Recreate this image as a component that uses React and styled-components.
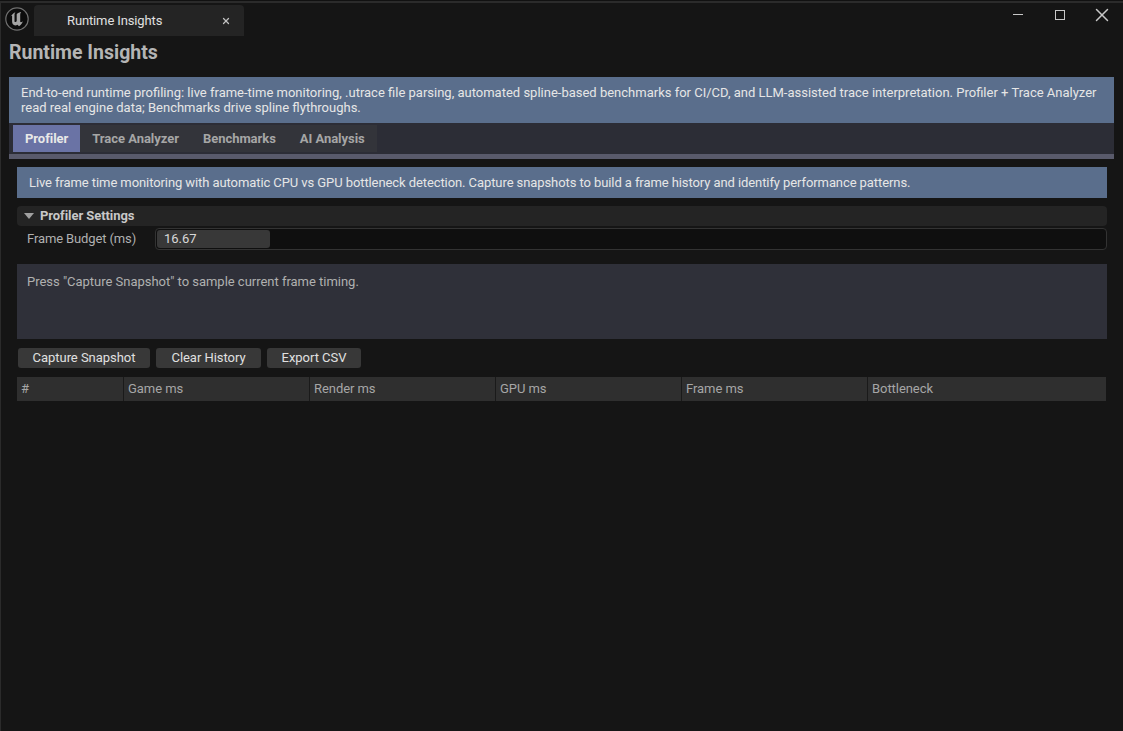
import React from "react";
import styled, { createGlobalStyle } from "styled-components";
import { X } from "lucide-react";

const GlobalStyle = createGlobalStyle`
  html, body, #root {
    margin: 0;
    height: 100%;
  }
  body {
    background: #111;
    font-family: Roboto, "Liberation Sans", sans-serif;
    font-size: 13px;
    overflow: hidden;
  }
`;

const Window = styled.div`
  height: 730px;
  margin-top: 1px;
  box-sizing: border-box;
  background: #151515;
  border-top: 2px solid #2b2b2b;
  border-left: 1px solid #2b2b2b;
  display: flex;
  flex-direction: column;
`;

const TitleBar = styled.div`
  height: 33px;
  display: flex;
  align-items: flex-end;
  flex-shrink: 0;
`;

const Logo = styled.svg`
  width: 24px;
  height: 24px;
  margin: 0 5px 5px 4px;
  flex-shrink: 0;
`;

const DocTab = styled.div`
  width: 210px;
  height: 31px;
  background: #242424;
  border-radius: 4px 4px 0 0;
  color: #e0e0e0;
  display: flex;
  align-items: center;
  justify-content: space-between;
  padding: 0 13px 0 33px;
  box-sizing: border-box;
  letter-spacing: -0.13px;
`;

const WindowControls = styled.div`
  margin-left: auto;
  align-self: flex-start;
  display: flex;
  align-items: center;
  height: 23px;
  color: #c8c8c8;
`;

const ControlButton = styled.div`
  width: 42px;
  height: 23px;
  display: flex;
  align-items: center;
  justify-content: center;
`;

const MinimizeGlyph = styled.div`
  width: 10px;
  height: 1px;
  background: #c8c8c8;
`;

const MaximizeGlyph = styled.div`
  width: 8px;
  height: 8px;
  border: 1px solid #c8c8c8;
`;

const Content = styled.div`
  padding: 0 9px 0 8px;
  display: flex;
  flex-direction: column;
`;

const Heading = styled.h1`
  margin: 0;
  height: 41px;
  line-height: 33px;
  font-size: 19.5px;
  font-weight: 700;
  color: #b4b4b4;
`;

const Banner = styled.div`
  background: #5a6e8c;
  color: #e6e6e6;
  line-height: 15px;
  padding: 8px 12px;
  height: 46px;
  box-sizing: border-box;
`;

const TabStrip = styled.div`
  background: #2c2d36;
  height: 31px;
  box-sizing: border-box;
  padding: 2px 0 2px 4px;
  display: flex;
`;

const TabList = styled.div`
  display: flex;
  background: #33343a;
`;

const Tab = styled.div`
  padding: 0 12px 1px;
  display: flex;
  align-items: center;
  font-weight: 700;
  letter-spacing: -0.04px;
  color: ${({ $active }) => ($active ? "#e8e8e8" : "#a6a6a6")};
  background: ${({ $active }) => ($active ? "#6a73a5" : "transparent")};
`;

const TabRule = styled.div`
  height: 5px;
  background: #595a6b;
`;

const Panel = styled.div`
  padding: 8px 7px 0 8px;
  display: flex;
  flex-direction: column;
`;

const InfoBanner = styled.div`
  background: #5a6e8c;
  color: #e6e6e6;
  height: 31px;
  padding: 0 12px;
  display: flex;
  align-items: center;
  letter-spacing: -0.085px;
`;

const SectionHeader = styled.div`
  margin-top: 8px;
  height: 20px;
  padding: 0 0 2px 7px;
  box-sizing: border-box;
  background: #242424;
  border-radius: 4px;
  display: flex;
  align-items: center;
  gap: 6px;
  color: #c8c8c8;
  font-weight: 700;
  letter-spacing: -0.06px;
`;

const Caret = styled.div`
  width: 0;
  height: 0;
  margin-top: 2px;
  border-left: 5px solid transparent;
  border-right: 5px solid transparent;
  border-top: 6px solid #a0a0a0;
`;

const FieldRow = styled.div`
  margin-top: 2px;
  display: flex;
  align-items: center;
  height: 22px;
`;

const FieldLabel = styled.div`
  width: 138px;
  padding: 0 0 2px 10px;
  box-sizing: border-box;
  color: #b0b0b0;
  letter-spacing: -0.12px;
`;

const NumberInput = styled.div`
  flex: 1;
  height: 100%;
  box-sizing: border-box;
  background: #0f0f0f;
  border: 1px solid #333;
  border-radius: 4px;
  padding: 1px;
  display: flex;
`;

const NumberFill = styled.div`
  width: 113px;
  background: #383838;
  border-radius: 3px;
  color: #d8d8d8;
  padding: 0 0 2px 7px;
  box-sizing: border-box;
  display: flex;
  align-items: center;
`;

const StatusBox = styled.div`
  margin-top: 14px;
  height: 75px;
  box-sizing: border-box;
  background: #2f3039;
  color: #b0b0b0;
  padding: 10px;
  line-height: 15px;
  letter-spacing: -0.02px;
`;

const ButtonRow = styled.div`
  margin-top: 9px;
  display: flex;
  gap: 6px;
  padding-left: 1px;
`;

const Button = styled.div`
  width: ${({ $width }) => $width}px;
  height: 20px;
  padding-bottom: 2px;
  box-sizing: border-box;
  background: #383838;
  border-radius: 3px;
  color: #e0e0e0;
  display: flex;
  align-items: center;
  justify-content: center;
  letter-spacing: -0.04px;
`;

const TableHeader = styled.div`
  margin-top: 9px;
  height: 24px;
  width: 1089px;
  display: grid;
  grid-template-columns: 107px 186px 186px 186px 186px 1fr;
  background: #2f2f2f;
`;

const HeaderCell = styled.div`
  display: flex;
  align-items: center;
  padding: 0 0 2px 4px;
  color: #a6a6a6;
  letter-spacing: -0.06px;
  border-right: ${({ $last }) => ($last ? "none" : "1px solid #1a1a1a")};
`;

const columns = ["#", "Game ms", "Render ms", "GPU ms", "Frame ms", "Bottleneck"];
const tabs = ["Profiler", "Trace Analyzer", "Benchmarks", "AI Analysis"];

export default function App() {
  return (
    <>
      <GlobalStyle />
      <Window>
        <TitleBar>
          <Logo viewBox="0 0 24 24">
            <circle cx="12" cy="12" r="11.2" fill="#0c0c0c" stroke="#707070" strokeWidth="1.2" />
            <path
              d="M5.600 9.800C6.600 7.800 8.200 6.200 10.400 5.200 9.700 6 9.500 6.700 9.500 7.600v6.600c0 .9.800 1.200 1.500.600l.7-.6V7.200c1.200-1.100 2.800-1.900 4.500-2.100-.7.800-1 1.600-1 2.600v7.100c.5.600 1.400.500 2.600-.6-.5 2-1.900 3.900-3.800 5l-1.500-1.500c-1.600 1.100-3.600.9-4.600-.4-.6-.8-.8-1.700-.8-2.800V9.200c0-.8-.9-.7-1.700.6z"
              fill="#a4a4a4"
            />
          </Logo>
          <DocTab>
            Runtime Insights
            <X size={10} strokeWidth={3} color="#c0c0c0" />
          </DocTab>
          <WindowControls>
            <ControlButton><MinimizeGlyph /></ControlButton>
            <ControlButton><MaximizeGlyph /></ControlButton>
            <ControlButton><X size={22} strokeWidth={1.6} color="#c8c8c8" /></ControlButton>
          </WindowControls>
        </TitleBar>
        <Content>
          <Heading>Runtime Insights</Heading>
          <Banner>
            End-to-end runtime profiling: live frame-time monitoring, .utrace file parsing, automated spline-based benchmarks for CI/CD, and LLM-assisted trace interpretation. Profiler + Trace Analyzer read real engine data; Benchmarks drive spline flythroughs.
          </Banner>
          <TabStrip>
            <TabList>
              {tabs.map((t, i) => (
                <Tab key={t} $active={i === 0}>{t}</Tab>
              ))}
            </TabList>
          </TabStrip>
          <TabRule />
          <Panel>
            <InfoBanner>
              Live frame time monitoring with automatic CPU vs GPU bottleneck detection. Capture snapshots to build a frame history and identify performance patterns.
            </InfoBanner>
            <SectionHeader>
              <Caret />
              Profiler Settings
            </SectionHeader>
            <FieldRow>
              <FieldLabel>Frame Budget (ms)</FieldLabel>
              <NumberInput>
                <NumberFill>16.67</NumberFill>
              </NumberInput>
            </FieldRow>
            <StatusBox>Press "Capture Snapshot" to sample current frame timing.</StatusBox>
            <ButtonRow>
              <Button $width={132}>Capture Snapshot</Button>
              <Button $width={105}>Clear History</Button>
              <Button $width={94}>Export CSV</Button>
            </ButtonRow>
            <TableHeader>
              {columns.map((c, i) => (
                <HeaderCell key={c} $last={i === columns.length - 1}>{c}</HeaderCell>
              ))}
            </TableHeader>
          </Panel>
        </Content>
      </Window>
    </>
  );
}
